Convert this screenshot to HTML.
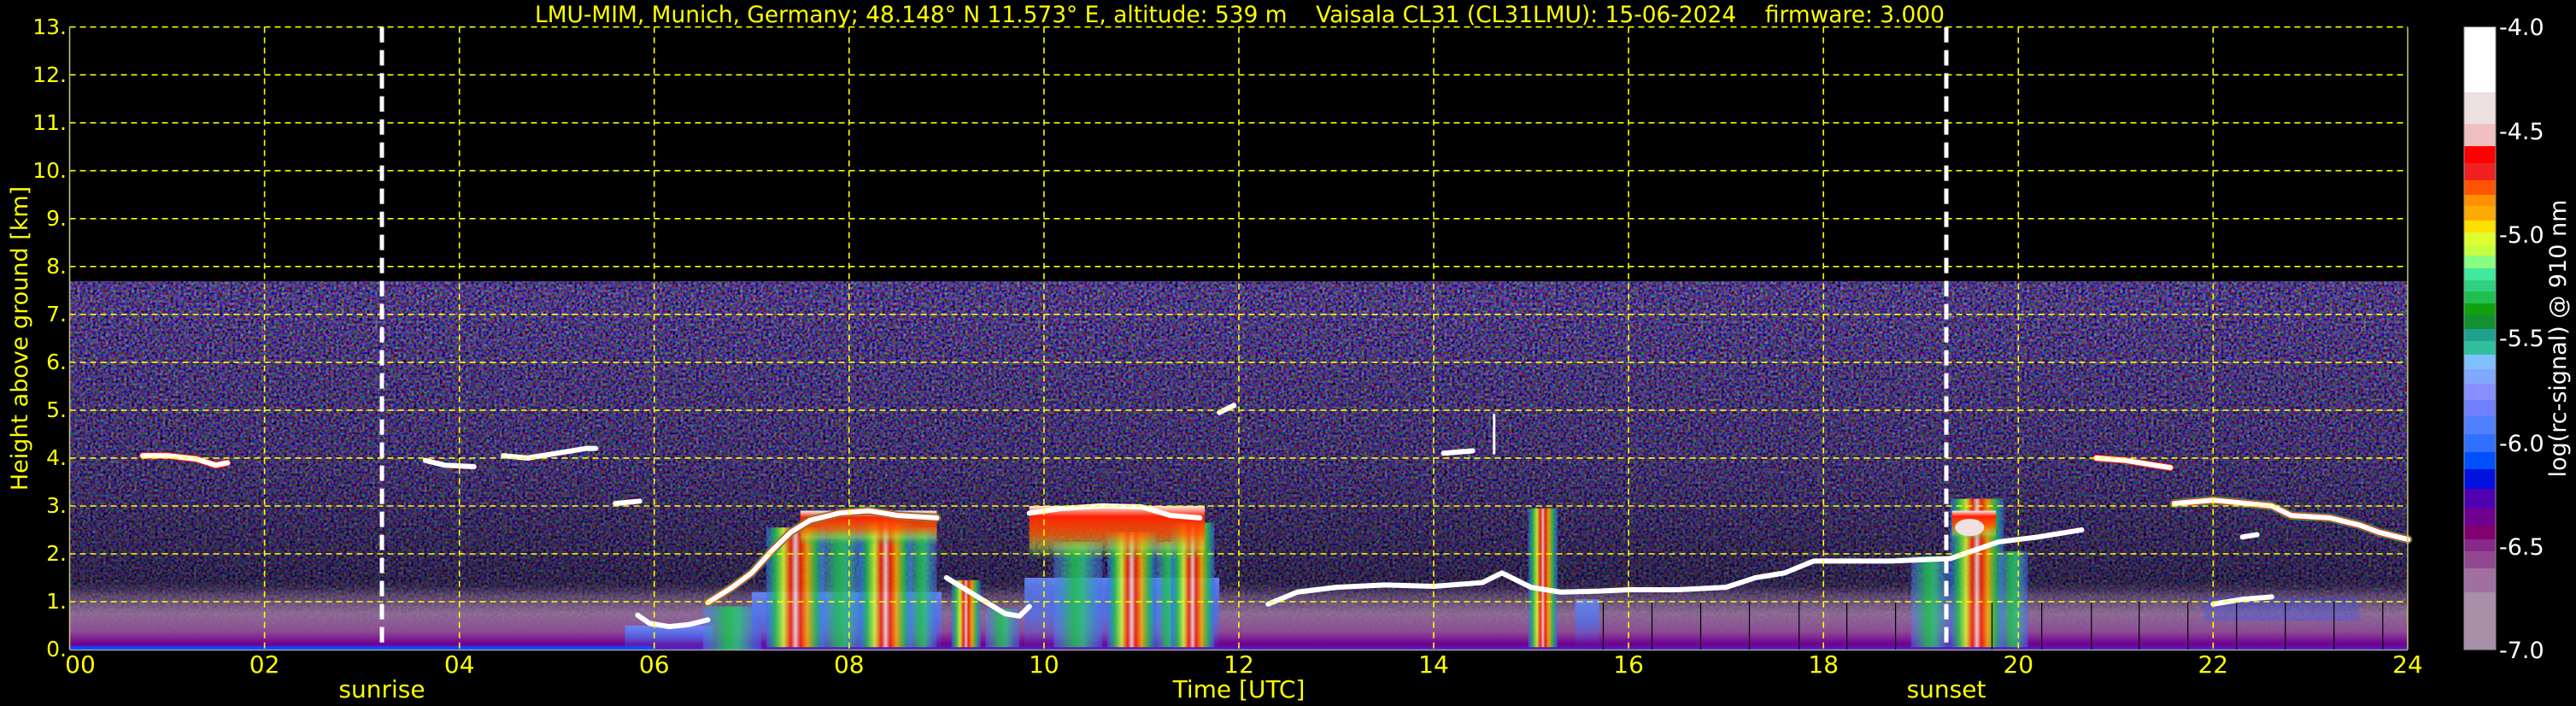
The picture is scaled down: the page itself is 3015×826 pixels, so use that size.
<!DOCTYPE html>
<html><head><meta charset="utf-8"><style>
html,body{margin:0;padding:0;background:#000;}
svg{display:block;}
text{font-family:"DejaVu Sans","Liberation Sans",sans-serif;}
</style></head><body>
<svg width="3015" height="826" viewBox="0 0 3015 826" xmlns="http://www.w3.org/2000/svg">
<defs>
<filter id="nz" x="0" y="0" width="100%" height="100%" filterUnits="objectBoundingBox" color-interpolation-filters="sRGB">
 <feTurbulence type="fractalNoise" baseFrequency="0.33" numOctaves="1" seed="7"/>
 <feComponentTransfer>
  <feFuncR type="discrete" tableValues="0 0 0.1 0.5 0.6 0.95 1"/>
  <feFuncG type="discrete" tableValues="0 0 0.05 0.35 0.55 0.9 1"/>
  <feFuncB type="discrete" tableValues="0 0 0.3 0.8 1 1 1"/>
  <feFuncA type="discrete" tableValues="1"/>
 </feComponentTransfer>
</filter>
<linearGradient id="dark" x1="0" y1="0" x2="0" y2="1">
 <stop offset="0" stop-color="#000" stop-opacity="0.3"/>
 <stop offset="0.5" stop-color="#000" stop-opacity="0.42"/>
 <stop offset="0.8" stop-color="#000" stop-opacity="0.58"/>
 <stop offset="1" stop-color="#000" stop-opacity="0.4"/>
</linearGradient>
<linearGradient id="band" x1="0" y1="0" x2="0" y2="1">
 <stop offset="0" stop-color="#000" stop-opacity="0"/>
 <stop offset="0.25" stop-color="#8a6a8a" stop-opacity="0.45"/>
 <stop offset="0.5" stop-color="#a07aa0" stop-opacity="0.8"/>
 <stop offset="0.75" stop-color="#904c96" stop-opacity="0.95"/>
 <stop offset="0.92" stop-color="#700090"/>
 <stop offset="1" stop-color="#5020c0"/>
</linearGradient>
<linearGradient id="rb" x1="0" y1="0" x2="1" y2="0">
 <stop offset="0" stop-color="#3070ff" stop-opacity="0.6"/>
 <stop offset="0.15" stop-color="#20c050"/>
 <stop offset="0.3" stop-color="#e0ff30"/>
 <stop offset="0.42" stop-color="#ff2000"/>
 <stop offset="0.5" stop-color="#f4e0e0"/>
 <stop offset="0.58" stop-color="#ff2000"/>
 <stop offset="0.7" stop-color="#ffb000"/>
 <stop offset="0.85" stop-color="#20c050"/>
 <stop offset="1" stop-color="#3070ff" stop-opacity="0.6"/>
</linearGradient>
<linearGradient id="gb" x1="0" y1="0" x2="1" y2="0">
 <stop offset="0" stop-color="#5080ff" stop-opacity="0.5"/>
 <stop offset="0.4" stop-color="#20c050"/>
 <stop offset="0.6" stop-color="#30c080"/>
 <stop offset="1" stop-color="#4070ff" stop-opacity="0.5"/>
</linearGradient>
<linearGradient id="mass" x1="0" y1="1" x2="0" y2="0">
 <stop offset="0" stop-color="#f8f0f0"/>
 <stop offset="0.2" stop-color="#ff2000"/>
 <stop offset="0.55" stop-color="#ff6000" stop-opacity="0.8"/>
 <stop offset="0.8" stop-color="#c0e040" stop-opacity="0.5"/>
 <stop offset="1" stop-color="#20c050" stop-opacity="0.1"/>
</linearGradient>
<linearGradient id="bl" x1="0" y1="0" x2="0" y2="1">
 <stop offset="0" stop-color="#4060ff" stop-opacity="0"/>
 <stop offset="0.5" stop-color="#4070ff" stop-opacity="0.7"/>
 <stop offset="1" stop-color="#6a8cff"/>
</linearGradient>
</defs>

<rect x="81.5" y="329" width="2737" height="431" filter="url(#nz)"/>
<rect x="81.5" y="329" width="2737" height="431" fill="url(#dark)"/>
<rect x="81.5" y="675" width="2737" height="85" fill="url(#band)"/>
<rect x="81.5" y="756" width="684" height="4" fill="#1040ff"/>

<g transform="translate(81.5,760) scale(114.04,-56.03)">
 <g opacity="0.9">
 <rect x="5.7" y="0" width="0.9" height="0.5" fill="url(#bl)"/>
 <rect x="6.5" y="0" width="0.6" height="0.9" fill="url(#gb)"/>
 <rect x="7.0" y="0" width="1.95" height="1.2" fill="url(#bl)"/>
 <rect x="9.8" y="0" width="2.0" height="1.5" fill="url(#bl)"/>
 </g>
 <g opacity="0.85">
 <rect x="7.15" y="0.05" width="0.6" height="2.5" fill="url(#rb)"/>
 <rect x="7.7" y="0.05" width="0.45" height="2.7" fill="url(#gb)"/>
 <rect x="8.1" y="0.05" width="0.55" height="2.8" fill="url(#rb)"/>
 <rect x="8.6" y="0.05" width="0.3" height="2.5" fill="url(#gb)"/>
 <rect x="9.05" y="0.05" width="0.3" height="1.4" fill="url(#rb)"/>
 <rect x="9.4" y="0.05" width="0.35" height="0.8" fill="url(#gb)"/>
 <rect x="10.1" y="0.05" width="0.5" height="2.2" fill="url(#gb)"/>
 <rect x="10.65" y="0.05" width="0.5" height="2.4" fill="url(#rb)"/>
 <rect x="11.15" y="0.05" width="0.25" height="2.2" fill="url(#gb)"/>
 <rect x="11.3" y="0.05" width="0.45" height="2.6" fill="url(#rb)"/>
 <rect x="14.97" y="0.05" width="0.3" height="2.9" fill="url(#rb)"/>
 <rect x="15.45" y="0.05" width="0.25" height="1.0" fill="url(#bl)"/>
 <rect x="18.9" y="0.05" width="0.4" height="1.9" fill="url(#gb)"/>
 <rect x="19.3" y="0.05" width="0.55" height="3.1" fill="url(#rb)"/>
 <rect x="19.8" y="0.05" width="0.3" height="2.0" fill="url(#gb)"/>
 </g>
 <rect x="21.9" y="0.6" width="1.6" height="0.5" fill="#3050ff" opacity="0.3"/>
 <rect x="7.5" y="2.2" width="1.4" height="0.7" fill="url(#mass)"/>
 <rect x="9.85" y="1.9" width="1.8" height="1.1" fill="url(#mass)"/>
 <rect x="19.32" y="2.3" width="0.45" height="0.6" fill="url(#mass)"/>
 <ellipse cx="19.5" cy="2.55" rx="0.15" ry="0.18" fill="#f0e0e0"/>
 <path d="M15.74 0V1M16.24 0V1M16.74 0V1M17.24 0V1M17.75 0V1M18.24 0V1M18.74 0V1M19.73 0V1M20.24 0V1M20.75 0V1M21.24 0V1M21.74 0V1M22.24 0V1M22.74 0V1M23.24 0V1M23.74 0V1" stroke="#000" stroke-width="1.2" vector-effect="non-scaling-stroke"/>
 <g fill="none" stroke-linejoin="round" stroke-linecap="round">
  <g stroke="#20c050" stroke-width="10" opacity="0.8">
   <polyline vector-effect="non-scaling-stroke" points="6.55,0.98 6.8,1.3 7.0,1.6 7.2,2.05 7.4,2.45 7.6,2.7 7.9,2.85 8.2,2.9 8.5,2.8 8.9,2.75"/>
   <polyline vector-effect="non-scaling-stroke" points="21.6,3.05 22.0,3.12 22.6,3.0 22.8,2.8 23.2,2.75 23.5,2.6 23.7,2.45 24,2.3"/>
  </g>
  <g stroke="#ff2000" stroke-width="8">
   <polyline vector-effect="non-scaling-stroke" points="0.75,4.05 1.0,4.05 1.3,3.98 1.5,3.85 1.62,3.9"/>
   <polyline vector-effect="non-scaling-stroke" points="6.55,0.98 6.8,1.3 7.0,1.6 7.2,2.05 7.4,2.45 7.6,2.7 7.9,2.85 8.2,2.9 8.5,2.8 8.9,2.75"/>
   <polyline vector-effect="non-scaling-stroke" points="20.8,4.0 21.1,3.95 21.4,3.85 21.56,3.8"/>
   <polyline vector-effect="non-scaling-stroke" points="21.6,3.05 22.0,3.12 22.6,3.0 22.8,2.8 23.2,2.75 23.5,2.6 23.7,2.45 24,2.3"/>
  </g>
  <g stroke="#fff" stroke-width="6">
   <polyline vector-effect="non-scaling-stroke" points="0.75,4.05 1.0,4.05 1.3,3.98 1.5,3.85 1.62,3.9"/>
   <polyline vector-effect="non-scaling-stroke" points="3.65,3.95 3.85,3.85 4.15,3.82"/>
   <polyline vector-effect="non-scaling-stroke" points="4.45,4.05 4.7,4.0 5.0,4.1 5.3,4.2 5.4,4.2"/>
   <polyline vector-effect="non-scaling-stroke" points="5.6,3.05 5.85,3.1"/>
   <polyline vector-effect="non-scaling-stroke" points="5.83,0.72 5.95,0.55 6.15,0.48 6.35,0.52 6.55,0.62"/>
   <polyline vector-effect="non-scaling-stroke" points="6.55,0.98 6.8,1.3 7.0,1.6 7.2,2.05 7.4,2.45 7.6,2.7 7.9,2.85 8.2,2.9 8.5,2.8 8.9,2.75"/>
   <polyline vector-effect="non-scaling-stroke" points="9.0,1.5 9.2,1.25 9.4,1.0 9.6,0.75 9.75,0.7 9.85,0.9"/>
   <polyline vector-effect="non-scaling-stroke" points="9.85,2.85 10.2,2.95 10.6,3.0 11.0,2.98 11.3,2.8 11.6,2.75"/>
   <polyline vector-effect="non-scaling-stroke" points="11.8,4.95 11.95,5.1"/>
   <polyline vector-effect="non-scaling-stroke" points="12.3,0.95 12.6,1.2 13.0,1.3 13.5,1.35 14.0,1.32 14.5,1.4 14.7,1.6 15.0,1.3 15.3,1.2 15.7,1.22 16.0,1.25 16.5,1.25 17.0,1.3 17.3,1.5 17.6,1.6 17.9,1.85 18.3,1.85 18.7,1.85 19.3,1.9"/>
   <polyline vector-effect="non-scaling-stroke" points="14.1,4.1 14.4,4.15"/>
   <polyline vector-effect="non-scaling-stroke" points="19.3,1.9 19.8,2.25 20.2,2.35 20.65,2.5"/>
   <polyline vector-effect="non-scaling-stroke" points="20.8,4.0 21.1,3.95 21.4,3.85 21.56,3.8"/>
   <polyline vector-effect="non-scaling-stroke" points="21.6,3.05 22.0,3.12 22.6,3.0 22.8,2.8 23.2,2.75 23.5,2.6 23.7,2.45 24,2.3"/>
   <polyline vector-effect="non-scaling-stroke" points="22.0,0.95 22.3,1.05 22.6,1.1"/>
   <polyline vector-effect="non-scaling-stroke" points="22.3,2.35 22.45,2.4"/>
  </g>
  <polyline vector-effect="non-scaling-stroke" stroke="#fff" stroke-width="3" points="14.62,4.1 14.62,4.9"/>
 </g>
</g>

<g stroke="#ffff00" stroke-width="1.6" stroke-dasharray="7,5" fill="none">
 <path d="M81.5 31.6H2818M81.5 87.6H2818M81.5 143.7H2818M81.5 199.7H2818M81.5 255.8H2818M81.5 311.8H2818M81.5 367.8H2818M81.5 423.9H2818M81.5 479.9H2818M81.5 535.9H2818M81.5 592H2818M81.5 648H2818M81.5 704H2818"/>
 <path d="M309.6 31.6V760M537.7 31.6V760M765.7 31.6V760M993.8 31.6V760M1221.9 31.6V760M1450 31.6V760M1678 31.6V760M1906.1 31.6V760M2134.2 31.6V760M2362.3 31.6V760M2590.3 31.6V760"/>
</g>
<path d="M81.5 31.6V760M2818 31.6V760" stroke="#c8c880" stroke-width="1.5"/>
<path d="M81.5 760.5H2818" stroke="#a0a0a0" stroke-width="1.5"/>
<path d="M447 31.6V760M2278 31.6V760" stroke="#fff" stroke-width="5" stroke-dasharray="18,9"/>

<text x="626" y="26" font-size="27" fill="#ffff00" textLength="1650" lengthAdjust="spacingAndGlyphs" xml:space="preserve">LMU-MIM, Munich, Germany; 48.148° N 11.573° E, altitude: 539 m    Vaisala CL31 (CL31LMU): 15-06-2024    firmware: 3.000</text>

<g font-size="25" fill="#ffff00" text-anchor="end">
 <text x="78" y="40">13.</text><text x="78" y="96">12.</text><text x="78" y="152">11.</text><text x="78" y="208">10.</text>
 <text x="78" y="264">9.</text><text x="78" y="320">8.</text><text x="78" y="376">7.</text><text x="78" y="432">6.</text>
 <text x="78" y="488">5.</text><text x="78" y="544">4.</text><text x="78" y="600">3.</text><text x="78" y="656">2.</text>
 <text x="78" y="712">1.</text><text x="78" y="768">0.</text>
</g>
<text transform="translate(32,396) rotate(-90)" font-size="27" fill="#ffff00" text-anchor="middle">Height above ground [km]</text>

<g font-size="28" fill="#ffff00" text-anchor="middle">
 <text x="94" y="787">00</text><text x="309.6" y="787">02</text><text x="537.7" y="787">04</text><text x="765.7" y="787">06</text>
 <text x="993.8" y="787">08</text><text x="1221.9" y="787">10</text><text x="1450" y="787">12</text><text x="1678" y="787">14</text>
 <text x="1906.1" y="787">16</text><text x="2134.2" y="787">18</text><text x="2362.3" y="787">20</text><text x="2590.3" y="787">22</text>
 <text x="2818" y="787">24</text>
 <text x="447" y="816">sunrise</text>
 <text x="1450" y="816">Time [UTC]</text>
 <text x="2278" y="816">sunset</text>
</g>

<g>
 <rect x="2884" y="31.6" width="37" height="76.4" fill="#ffffff"/>
 <rect x="2884" y="108" width="37" height="37" fill="#ece0e0"/>
 <rect x="2884" y="145" width="37" height="26" fill="#f0c0c0"/>
 <rect x="2884" y="171" width="37" height="20" fill="#ff0000"/>
 <rect x="2884" y="191" width="37" height="20" fill="#f02020"/>
 <rect x="2884" y="211" width="37" height="17" fill="#ff5500"/>
 <rect x="2884" y="228" width="37" height="13" fill="#ff9000"/>
 <rect x="2884" y="241" width="37" height="17" fill="#ffaa00"/>
 <rect x="2884" y="258" width="37" height="14" fill="#ffe000"/>
 <rect x="2884" y="272" width="37" height="15" fill="#e0ff30"/>
 <rect x="2884" y="287" width="37" height="12" fill="#c8ff40"/>
 <rect x="2884" y="299" width="37" height="15" fill="#88ff80"/>
 <rect x="2884" y="314" width="37" height="14" fill="#40e8a0"/>
 <rect x="2884" y="328" width="37" height="13" fill="#30d080"/>
 <rect x="2884" y="341" width="37" height="14" fill="#20c050"/>
 <rect x="2884" y="355" width="37" height="14" fill="#10a010"/>
 <rect x="2884" y="369" width="37" height="16" fill="#109030"/>
 <rect x="2884" y="385" width="37" height="14" fill="#20a090"/>
 <rect x="2884" y="399" width="37" height="16" fill="#30c0a0"/>
 <rect x="2884" y="415" width="37" height="17" fill="#80c0ff"/>
 <rect x="2884" y="432" width="37" height="17" fill="#80a8ff"/>
 <rect x="2884" y="449" width="37" height="19" fill="#8890ff"/>
 <rect x="2884" y="468" width="37" height="19" fill="#7080ff"/>
 <rect x="2884" y="487" width="37" height="21" fill="#5080ff"/>
 <rect x="2884" y="508" width="37" height="21" fill="#3070ff"/>
 <rect x="2884" y="529" width="37" height="20" fill="#0050ff"/>
 <rect x="2884" y="549" width="37" height="23" fill="#0010e0"/>
 <rect x="2884" y="572" width="37" height="23" fill="#5000b0"/>
 <rect x="2884" y="595" width="37" height="20" fill="#700090"/>
 <rect x="2884" y="615" width="37" height="16" fill="#800070"/>
 <rect x="2884" y="631" width="37" height="14" fill="#882888"/>
 <rect x="2884" y="645" width="37" height="20" fill="#904890"/>
 <rect x="2884" y="665" width="37" height="28" fill="#a070a0"/>
 <rect x="2884" y="693" width="37" height="67" fill="#a890a8"/>
 <rect x="2884" y="31.6" width="37" height="728.4" fill="none" stroke="#909090" stroke-width="1"/>
</g>
<g font-size="27" fill="#fff">
 <text x="2925" y="41">-4.0</text>
 <text x="2925" y="163">-4.5</text>
 <text x="2925" y="284">-5.0</text>
 <text x="2925" y="405">-5.5</text>
 <text x="2925" y="528">-6.0</text>
 <text x="2925" y="649">-6.5</text>
 <text x="2925" y="770">-7.0</text>
</g>
<text transform="translate(3003,396) rotate(-90)" font-size="27" fill="#fff" text-anchor="middle">log(rc-signal) @ 910 nm</text>
</svg>
</body></html>
